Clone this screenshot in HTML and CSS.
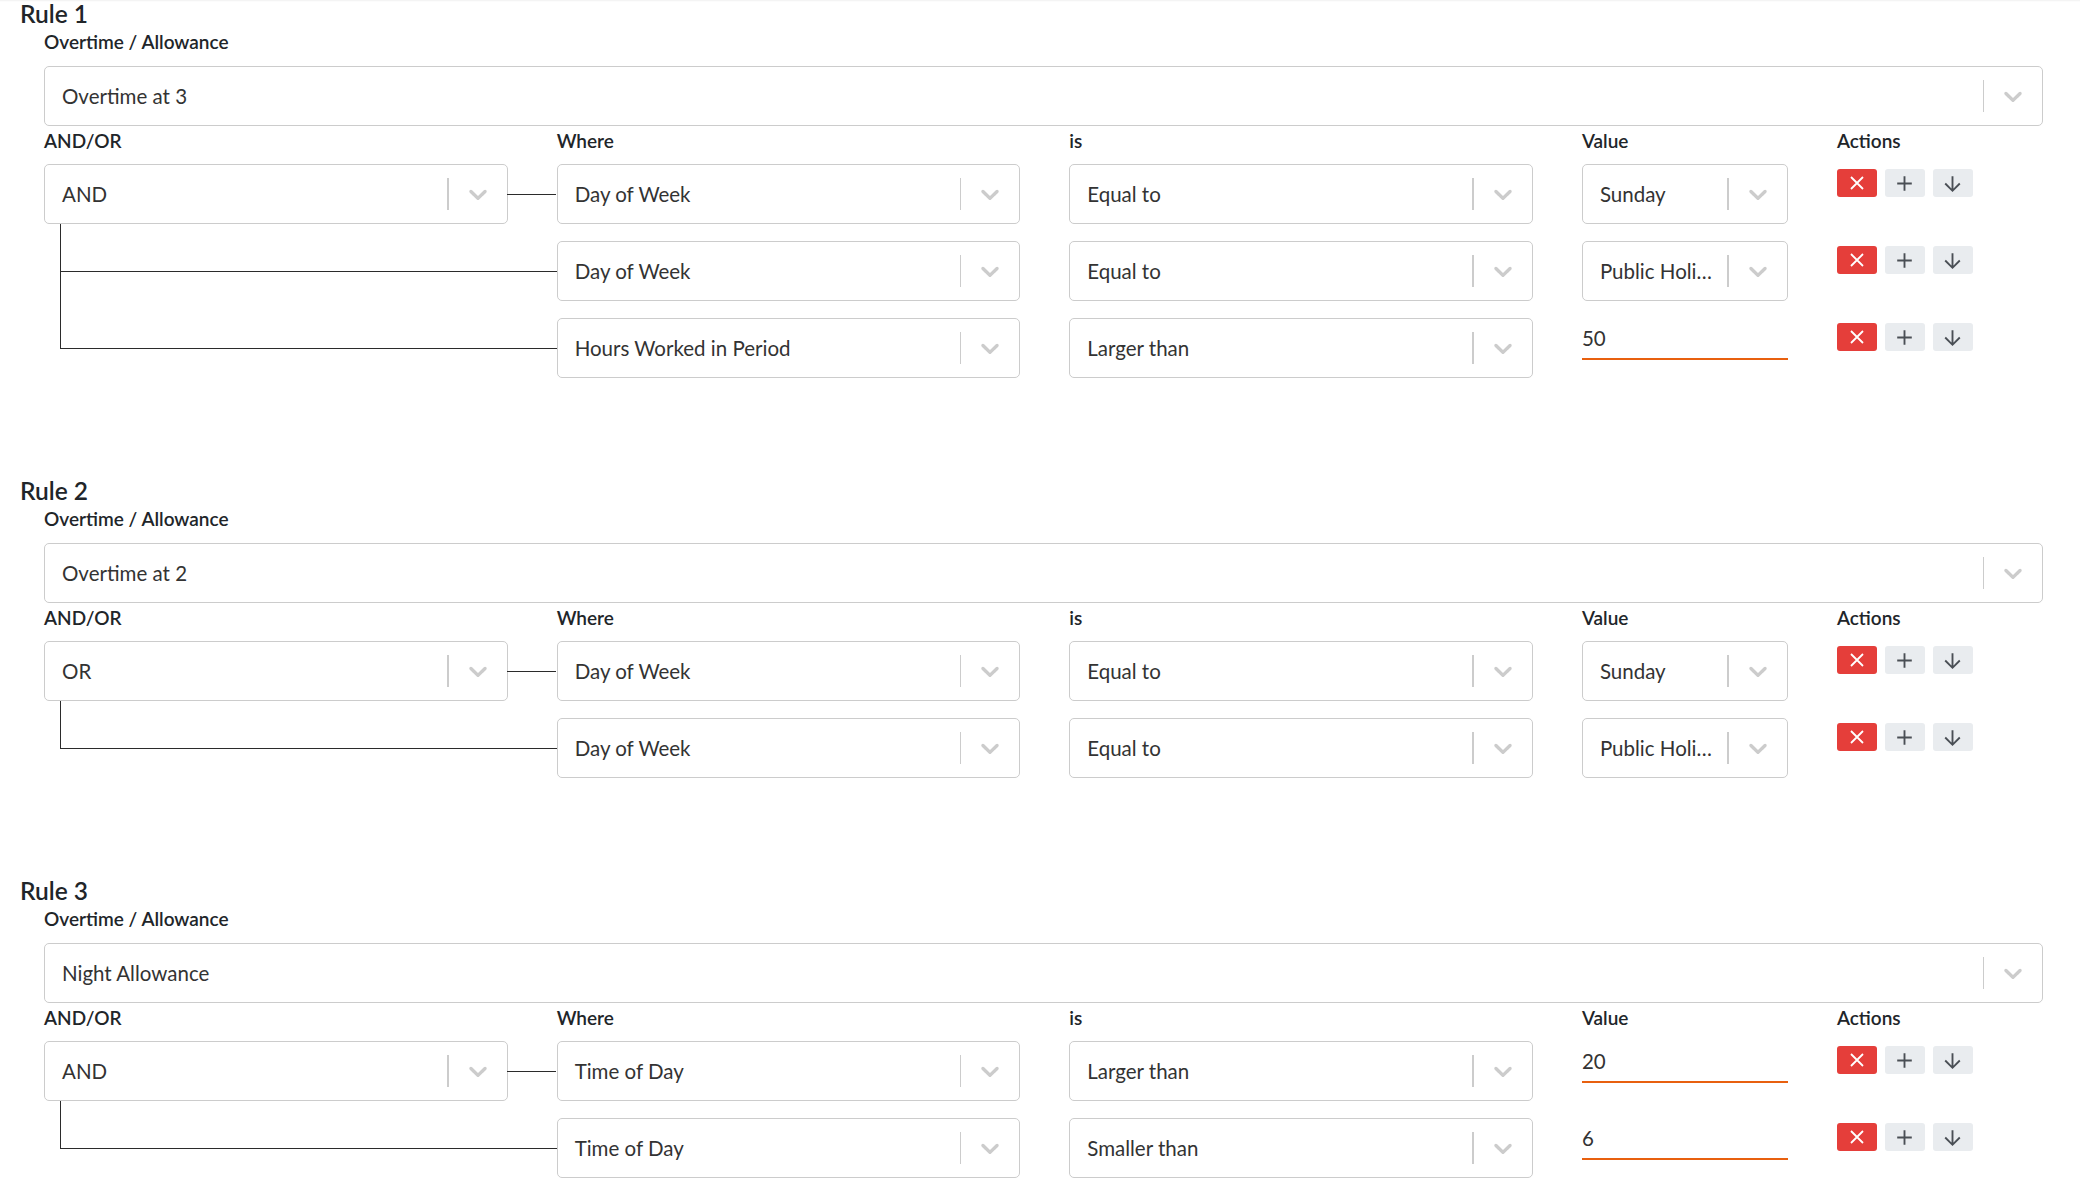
FILE: index.html
```html
<!DOCTYPE html>
<html lang="en">
<head>
  <meta charset="UTF-8" />
  <title>Overtime Rules</title>
  <link rel="stylesheet" href="styles.css">
</head>
<body>

  <div class="page">

    <!-- Rule 1 -->
    <section class="rule">
      <h2 class="rule-title">Rule 1</h2>
      <div class="rule-body">
        <label class="field-label">Overtime / Allowance</label>
        <div class="select">
          <span class="select-value">Overtime at 3</span>
          <span class="select-sep"></span>
          <span class="select-arrow"><svg viewBox="0 0 20 20"><path d="M4.516 7.548c0.436-0.446 1.043-0.481 1.576 0l3.908 3.747 3.908-3.747c0.533-0.481 1.141-0.446 1.574 0 0.436 0.445 0.408 1.197 0 1.615-0.406 0.418-4.695 4.502-4.695 4.502-0.217 0.223-0.502 0.335-0.787 0.335s-0.57-0.112-0.789-0.335c0 0-4.287-4.084-4.695-4.502s-0.436-1.17 0-1.615z"/></svg></span>
        </div>

        <div class="cond-grid cond-head">
          <label class="field-label">AND/OR</label>
          <label class="field-label">Where</label>
          <label class="field-label">is</label>
          <label class="field-label">Value</label>
          <label class="field-label">Actions</label>
        </div>

        <div class="cond-rows">
          <div class="cond-grid cond-row">
            <div class="select logic">
              <span class="select-value">AND</span>
              <span class="select-sep"></span>
              <span class="select-arrow"><svg viewBox="0 0 20 20"><path d="M4.516 7.548c0.436-0.446 1.043-0.481 1.576 0l3.908 3.747 3.908-3.747c0.533-0.481 1.141-0.446 1.574 0 0.436 0.445 0.408 1.197 0 1.615-0.406 0.418-4.695 4.502-4.695 4.502-0.217 0.223-0.502 0.335-0.787 0.335s-0.57-0.112-0.789-0.335c0 0-4.287-4.084-4.695-4.502s-0.436-1.17 0-1.615z"/></svg></span>
            </div>
            <div class="select">
              <span class="select-value">Day of Week</span>
              <span class="select-sep"></span>
              <span class="select-arrow"><svg viewBox="0 0 20 20"><path d="M4.516 7.548c0.436-0.446 1.043-0.481 1.576 0l3.908 3.747 3.908-3.747c0.533-0.481 1.141-0.446 1.574 0 0.436 0.445 0.408 1.197 0 1.615-0.406 0.418-4.695 4.502-4.695 4.502-0.217 0.223-0.502 0.335-0.787 0.335s-0.57-0.112-0.789-0.335c0 0-4.287-4.084-4.695-4.502s-0.436-1.17 0-1.615z"/></svg></span>
            </div>
            <div class="select">
              <span class="select-value">Equal to</span>
              <span class="select-sep"></span>
              <span class="select-arrow"><svg viewBox="0 0 20 20"><path d="M4.516 7.548c0.436-0.446 1.043-0.481 1.576 0l3.908 3.747 3.908-3.747c0.533-0.481 1.141-0.446 1.574 0 0.436 0.445 0.408 1.197 0 1.615-0.406 0.418-4.695 4.502-4.695 4.502-0.217 0.223-0.502 0.335-0.787 0.335s-0.57-0.112-0.789-0.335c0 0-4.287-4.084-4.695-4.502s-0.436-1.17 0-1.615z"/></svg></span>
            </div>
            <div class="select">
              <span class="select-value">Sunday</span>
              <span class="select-sep"></span>
              <span class="select-arrow"><svg viewBox="0 0 20 20"><path d="M4.516 7.548c0.436-0.446 1.043-0.481 1.576 0l3.908 3.747 3.908-3.747c0.533-0.481 1.141-0.446 1.574 0 0.436 0.445 0.408 1.197 0 1.615-0.406 0.418-4.695 4.502-4.695 4.502-0.217 0.223-0.502 0.335-0.787 0.335s-0.57-0.112-0.789-0.335c0 0-4.287-4.084-4.695-4.502s-0.436-1.17 0-1.615z"/></svg></span>
            </div>
            <div class="actions">
              <button class="btn btn-remove"><svg viewBox="0 0 24 24"><path d="M18 6 6 18M6 6l12 12"/></svg></button>
              <button class="btn"><svg viewBox="0 0 24 24"><path d="M12 5v14M5 12h14"/></svg></button>
              <button class="btn"><svg viewBox="0 0 24 24"><path d="M12 5v14M19 12l-7 7-7-7"/></svg></button>
            </div>
          </div>

          <div class="cond-grid cond-row">
            <div class="branch"></div>
            <div class="select">
              <span class="select-value">Day of Week</span>
              <span class="select-sep"></span>
              <span class="select-arrow"><svg viewBox="0 0 20 20"><path d="M4.516 7.548c0.436-0.446 1.043-0.481 1.576 0l3.908 3.747 3.908-3.747c0.533-0.481 1.141-0.446 1.574 0 0.436 0.445 0.408 1.197 0 1.615-0.406 0.418-4.695 4.502-4.695 4.502-0.217 0.223-0.502 0.335-0.787 0.335s-0.57-0.112-0.789-0.335c0 0-4.287-4.084-4.695-4.502s-0.436-1.17 0-1.615z"/></svg></span>
            </div>
            <div class="select">
              <span class="select-value">Equal to</span>
              <span class="select-sep"></span>
              <span class="select-arrow"><svg viewBox="0 0 20 20"><path d="M4.516 7.548c0.436-0.446 1.043-0.481 1.576 0l3.908 3.747 3.908-3.747c0.533-0.481 1.141-0.446 1.574 0 0.436 0.445 0.408 1.197 0 1.615-0.406 0.418-4.695 4.502-4.695 4.502-0.217 0.223-0.502 0.335-0.787 0.335s-0.57-0.112-0.789-0.335c0 0-4.287-4.084-4.695-4.502s-0.436-1.17 0-1.615z"/></svg></span>
            </div>
            <div class="select">
              <span class="select-value">Public Holiday</span>
              <span class="select-sep"></span>
              <span class="select-arrow"><svg viewBox="0 0 20 20"><path d="M4.516 7.548c0.436-0.446 1.043-0.481 1.576 0l3.908 3.747 3.908-3.747c0.533-0.481 1.141-0.446 1.574 0 0.436 0.445 0.408 1.197 0 1.615-0.406 0.418-4.695 4.502-4.695 4.502-0.217 0.223-0.502 0.335-0.787 0.335s-0.57-0.112-0.789-0.335c0 0-4.287-4.084-4.695-4.502s-0.436-1.17 0-1.615z"/></svg></span>
            </div>
            <div class="actions">
              <button class="btn btn-remove"><svg viewBox="0 0 24 24"><path d="M18 6 6 18M6 6l12 12"/></svg></button>
              <button class="btn"><svg viewBox="0 0 24 24"><path d="M12 5v14M5 12h14"/></svg></button>
              <button class="btn"><svg viewBox="0 0 24 24"><path d="M12 5v14M19 12l-7 7-7-7"/></svg></button>
            </div>
          </div>

          <div class="cond-grid cond-row">
            <div class="branch"></div>
            <div class="select">
              <span class="select-value">Hours Worked in Period</span>
              <span class="select-sep"></span>
              <span class="select-arrow"><svg viewBox="0 0 20 20"><path d="M4.516 7.548c0.436-0.446 1.043-0.481 1.576 0l3.908 3.747 3.908-3.747c0.533-0.481 1.141-0.446 1.574 0 0.436 0.445 0.408 1.197 0 1.615-0.406 0.418-4.695 4.502-4.695 4.502-0.217 0.223-0.502 0.335-0.787 0.335s-0.57-0.112-0.789-0.335c0 0-4.287-4.084-4.695-4.502s-0.436-1.17 0-1.615z"/></svg></span>
            </div>
            <div class="select">
              <span class="select-value">Larger than</span>
              <span class="select-sep"></span>
              <span class="select-arrow"><svg viewBox="0 0 20 20"><path d="M4.516 7.548c0.436-0.446 1.043-0.481 1.576 0l3.908 3.747 3.908-3.747c0.533-0.481 1.141-0.446 1.574 0 0.436 0.445 0.408 1.197 0 1.615-0.406 0.418-4.695 4.502-4.695 4.502-0.217 0.223-0.502 0.335-0.787 0.335s-0.57-0.112-0.789-0.335c0 0-4.287-4.084-4.695-4.502s-0.436-1.17 0-1.615z"/></svg></span>
            </div>
            <input class="value-input" type="text" value="50" />
            <div class="actions">
              <button class="btn btn-remove"><svg viewBox="0 0 24 24"><path d="M18 6 6 18M6 6l12 12"/></svg></button>
              <button class="btn"><svg viewBox="0 0 24 24"><path d="M12 5v14M5 12h14"/></svg></button>
              <button class="btn"><svg viewBox="0 0 24 24"><path d="M12 5v14M19 12l-7 7-7-7"/></svg></button>
            </div>
          </div>
        </div>
      </div>
    </section>

    <!-- Rule 2 -->
    <section class="rule">
      <h2 class="rule-title">Rule 2</h2>
      <div class="rule-body">
        <label class="field-label">Overtime / Allowance</label>
        <div class="select">
          <span class="select-value">Overtime at 2</span>
          <span class="select-sep"></span>
          <span class="select-arrow"><svg viewBox="0 0 20 20"><path d="M4.516 7.548c0.436-0.446 1.043-0.481 1.576 0l3.908 3.747 3.908-3.747c0.533-0.481 1.141-0.446 1.574 0 0.436 0.445 0.408 1.197 0 1.615-0.406 0.418-4.695 4.502-4.695 4.502-0.217 0.223-0.502 0.335-0.787 0.335s-0.57-0.112-0.789-0.335c0 0-4.287-4.084-4.695-4.502s-0.436-1.17 0-1.615z"/></svg></span>
        </div>

        <div class="cond-grid cond-head">
          <label class="field-label">AND/OR</label>
          <label class="field-label">Where</label>
          <label class="field-label">is</label>
          <label class="field-label">Value</label>
          <label class="field-label">Actions</label>
        </div>

        <div class="cond-rows">
          <div class="cond-grid cond-row">
            <div class="select logic">
              <span class="select-value">OR</span>
              <span class="select-sep"></span>
              <span class="select-arrow"><svg viewBox="0 0 20 20"><path d="M4.516 7.548c0.436-0.446 1.043-0.481 1.576 0l3.908 3.747 3.908-3.747c0.533-0.481 1.141-0.446 1.574 0 0.436 0.445 0.408 1.197 0 1.615-0.406 0.418-4.695 4.502-4.695 4.502-0.217 0.223-0.502 0.335-0.787 0.335s-0.57-0.112-0.789-0.335c0 0-4.287-4.084-4.695-4.502s-0.436-1.17 0-1.615z"/></svg></span>
            </div>
            <div class="select">
              <span class="select-value">Day of Week</span>
              <span class="select-sep"></span>
              <span class="select-arrow"><svg viewBox="0 0 20 20"><path d="M4.516 7.548c0.436-0.446 1.043-0.481 1.576 0l3.908 3.747 3.908-3.747c0.533-0.481 1.141-0.446 1.574 0 0.436 0.445 0.408 1.197 0 1.615-0.406 0.418-4.695 4.502-4.695 4.502-0.217 0.223-0.502 0.335-0.787 0.335s-0.57-0.112-0.789-0.335c0 0-4.287-4.084-4.695-4.502s-0.436-1.17 0-1.615z"/></svg></span>
            </div>
            <div class="select">
              <span class="select-value">Equal to</span>
              <span class="select-sep"></span>
              <span class="select-arrow"><svg viewBox="0 0 20 20"><path d="M4.516 7.548c0.436-0.446 1.043-0.481 1.576 0l3.908 3.747 3.908-3.747c0.533-0.481 1.141-0.446 1.574 0 0.436 0.445 0.408 1.197 0 1.615-0.406 0.418-4.695 4.502-4.695 4.502-0.217 0.223-0.502 0.335-0.787 0.335s-0.57-0.112-0.789-0.335c0 0-4.287-4.084-4.695-4.502s-0.436-1.17 0-1.615z"/></svg></span>
            </div>
            <div class="select">
              <span class="select-value">Sunday</span>
              <span class="select-sep"></span>
              <span class="select-arrow"><svg viewBox="0 0 20 20"><path d="M4.516 7.548c0.436-0.446 1.043-0.481 1.576 0l3.908 3.747 3.908-3.747c0.533-0.481 1.141-0.446 1.574 0 0.436 0.445 0.408 1.197 0 1.615-0.406 0.418-4.695 4.502-4.695 4.502-0.217 0.223-0.502 0.335-0.787 0.335s-0.57-0.112-0.789-0.335c0 0-4.287-4.084-4.695-4.502s-0.436-1.17 0-1.615z"/></svg></span>
            </div>
            <div class="actions">
              <button class="btn btn-remove"><svg viewBox="0 0 24 24"><path d="M18 6 6 18M6 6l12 12"/></svg></button>
              <button class="btn"><svg viewBox="0 0 24 24"><path d="M12 5v14M5 12h14"/></svg></button>
              <button class="btn"><svg viewBox="0 0 24 24"><path d="M12 5v14M19 12l-7 7-7-7"/></svg></button>
            </div>
          </div>

          <div class="cond-grid cond-row">
            <div class="branch"></div>
            <div class="select">
              <span class="select-value">Day of Week</span>
              <span class="select-sep"></span>
              <span class="select-arrow"><svg viewBox="0 0 20 20"><path d="M4.516 7.548c0.436-0.446 1.043-0.481 1.576 0l3.908 3.747 3.908-3.747c0.533-0.481 1.141-0.446 1.574 0 0.436 0.445 0.408 1.197 0 1.615-0.406 0.418-4.695 4.502-4.695 4.502-0.217 0.223-0.502 0.335-0.787 0.335s-0.57-0.112-0.789-0.335c0 0-4.287-4.084-4.695-4.502s-0.436-1.17 0-1.615z"/></svg></span>
            </div>
            <div class="select">
              <span class="select-value">Equal to</span>
              <span class="select-sep"></span>
              <span class="select-arrow"><svg viewBox="0 0 20 20"><path d="M4.516 7.548c0.436-0.446 1.043-0.481 1.576 0l3.908 3.747 3.908-3.747c0.533-0.481 1.141-0.446 1.574 0 0.436 0.445 0.408 1.197 0 1.615-0.406 0.418-4.695 4.502-4.695 4.502-0.217 0.223-0.502 0.335-0.787 0.335s-0.57-0.112-0.789-0.335c0 0-4.287-4.084-4.695-4.502s-0.436-1.17 0-1.615z"/></svg></span>
            </div>
            <div class="select">
              <span class="select-value">Public Holiday</span>
              <span class="select-sep"></span>
              <span class="select-arrow"><svg viewBox="0 0 20 20"><path d="M4.516 7.548c0.436-0.446 1.043-0.481 1.576 0l3.908 3.747 3.908-3.747c0.533-0.481 1.141-0.446 1.574 0 0.436 0.445 0.408 1.197 0 1.615-0.406 0.418-4.695 4.502-4.695 4.502-0.217 0.223-0.502 0.335-0.787 0.335s-0.57-0.112-0.789-0.335c0 0-4.287-4.084-4.695-4.502s-0.436-1.17 0-1.615z"/></svg></span>
            </div>
            <div class="actions">
              <button class="btn btn-remove"><svg viewBox="0 0 24 24"><path d="M18 6 6 18M6 6l12 12"/></svg></button>
              <button class="btn"><svg viewBox="0 0 24 24"><path d="M12 5v14M5 12h14"/></svg></button>
              <button class="btn"><svg viewBox="0 0 24 24"><path d="M12 5v14M19 12l-7 7-7-7"/></svg></button>
            </div>
          </div>
        </div>
      </div>
    </section>

    <!-- Rule 3 -->
    <section class="rule">
      <h2 class="rule-title">Rule 3</h2>
      <div class="rule-body">
        <label class="field-label">Overtime / Allowance</label>
        <div class="select">
          <span class="select-value">Night Allowance</span>
          <span class="select-sep"></span>
          <span class="select-arrow"><svg viewBox="0 0 20 20"><path d="M4.516 7.548c0.436-0.446 1.043-0.481 1.576 0l3.908 3.747 3.908-3.747c0.533-0.481 1.141-0.446 1.574 0 0.436 0.445 0.408 1.197 0 1.615-0.406 0.418-4.695 4.502-4.695 4.502-0.217 0.223-0.502 0.335-0.787 0.335s-0.57-0.112-0.789-0.335c0 0-4.287-4.084-4.695-4.502s-0.436-1.17 0-1.615z"/></svg></span>
        </div>

        <div class="cond-grid cond-head">
          <label class="field-label">AND/OR</label>
          <label class="field-label">Where</label>
          <label class="field-label">is</label>
          <label class="field-label">Value</label>
          <label class="field-label">Actions</label>
        </div>

        <div class="cond-rows">
          <div class="cond-grid cond-row">
            <div class="select logic">
              <span class="select-value">AND</span>
              <span class="select-sep"></span>
              <span class="select-arrow"><svg viewBox="0 0 20 20"><path d="M4.516 7.548c0.436-0.446 1.043-0.481 1.576 0l3.908 3.747 3.908-3.747c0.533-0.481 1.141-0.446 1.574 0 0.436 0.445 0.408 1.197 0 1.615-0.406 0.418-4.695 4.502-4.695 4.502-0.217 0.223-0.502 0.335-0.787 0.335s-0.57-0.112-0.789-0.335c0 0-4.287-4.084-4.695-4.502s-0.436-1.17 0-1.615z"/></svg></span>
            </div>
            <div class="select">
              <span class="select-value">Time of Day</span>
              <span class="select-sep"></span>
              <span class="select-arrow"><svg viewBox="0 0 20 20"><path d="M4.516 7.548c0.436-0.446 1.043-0.481 1.576 0l3.908 3.747 3.908-3.747c0.533-0.481 1.141-0.446 1.574 0 0.436 0.445 0.408 1.197 0 1.615-0.406 0.418-4.695 4.502-4.695 4.502-0.217 0.223-0.502 0.335-0.787 0.335s-0.57-0.112-0.789-0.335c0 0-4.287-4.084-4.695-4.502s-0.436-1.17 0-1.615z"/></svg></span>
            </div>
            <div class="select">
              <span class="select-value">Larger than</span>
              <span class="select-sep"></span>
              <span class="select-arrow"><svg viewBox="0 0 20 20"><path d="M4.516 7.548c0.436-0.446 1.043-0.481 1.576 0l3.908 3.747 3.908-3.747c0.533-0.481 1.141-0.446 1.574 0 0.436 0.445 0.408 1.197 0 1.615-0.406 0.418-4.695 4.502-4.695 4.502-0.217 0.223-0.502 0.335-0.787 0.335s-0.57-0.112-0.789-0.335c0 0-4.287-4.084-4.695-4.502s-0.436-1.17 0-1.615z"/></svg></span>
            </div>
            <input class="value-input" type="text" value="20" />
            <div class="actions">
              <button class="btn btn-remove"><svg viewBox="0 0 24 24"><path d="M18 6 6 18M6 6l12 12"/></svg></button>
              <button class="btn"><svg viewBox="0 0 24 24"><path d="M12 5v14M5 12h14"/></svg></button>
              <button class="btn"><svg viewBox="0 0 24 24"><path d="M12 5v14M19 12l-7 7-7-7"/></svg></button>
            </div>
          </div>

          <div class="cond-grid cond-row">
            <div class="branch"></div>
            <div class="select">
              <span class="select-value">Time of Day</span>
              <span class="select-sep"></span>
              <span class="select-arrow"><svg viewBox="0 0 20 20"><path d="M4.516 7.548c0.436-0.446 1.043-0.481 1.576 0l3.908 3.747 3.908-3.747c0.533-0.481 1.141-0.446 1.574 0 0.436 0.445 0.408 1.197 0 1.615-0.406 0.418-4.695 4.502-4.695 4.502-0.217 0.223-0.502 0.335-0.787 0.335s-0.57-0.112-0.789-0.335c0 0-4.287-4.084-4.695-4.502s-0.436-1.17 0-1.615z"/></svg></span>
            </div>
            <div class="select">
              <span class="select-value">Smaller than</span>
              <span class="select-sep"></span>
              <span class="select-arrow"><svg viewBox="0 0 20 20"><path d="M4.516 7.548c0.436-0.446 1.043-0.481 1.576 0l3.908 3.747 3.908-3.747c0.533-0.481 1.141-0.446 1.574 0 0.436 0.445 0.408 1.197 0 1.615-0.406 0.418-4.695 4.502-4.695 4.502-0.217 0.223-0.502 0.335-0.787 0.335s-0.57-0.112-0.789-0.335c0 0-4.287-4.084-4.695-4.502s-0.436-1.17 0-1.615z"/></svg></span>
            </div>
            <input class="value-input" type="text" value="6" />
            <div class="actions">
              <button class="btn btn-remove"><svg viewBox="0 0 24 24"><path d="M18 6 6 18M6 6l12 12"/></svg></button>
              <button class="btn"><svg viewBox="0 0 24 24"><path d="M12 5v14M5 12h14"/></svg></button>
              <button class="btn"><svg viewBox="0 0 24 24"><path d="M12 5v14M19 12l-7 7-7-7"/></svg></button>
            </div>
          </div>
        </div>
      </div>
    </section>

  </div>

</body>
</html>
```

FILE: styles.css
```css
body {
  font-family: Lato, "Open Sans", sans-serif;
  color: #212529;
  background-color: #fff;
  margin: 0;
}
.page {
  padding: 0 37px 0 20px;
  box-shadow: inset 0 3px 2px -2px rgba(0, 0, 0, 0.06);
}
.rule {
  margin-bottom: 99px;
}
.rule-title {
  font-size: 24.5px;
  font-weight: 600;
  line-height: 28px;
  margin: 0;
}
.rule-body {
  padding-left: 24px;
}
.field-label {
  display: block;
  font-size: 19px;
  font-weight: 600;
  line-height: 24px;
  margin-top: 2px;
  margin-bottom: 12px;
}

/* select boxes */
.select {
  display: flex;
  align-items: center;
  height: 60px;
  box-sizing: border-box;
  border: 1px solid #ccc;
  border-radius: 5px;
  background: #fff;
  color: #333;
  font-size: 20.5px;
  min-width: 0;
}
.select-value {
  flex: 1;
  min-width: 0;
  padding: 0 6px 0 17px;
  white-space: nowrap;
  overflow: hidden;
  text-overflow: ellipsis;
}
.select-sep {
  width: 1.5px;
  height: 32px;
  background-color: #ccc;
}
.select-arrow {
  width: 58px;
  display: flex;
  justify-content: center;
}
.select-arrow svg {
  width: 30px;
  height: 30px;
  fill: #ccc;
}

/* condition rows */
.cond-grid {
  display: grid;
  grid-template-columns: minmax(0, 9fr) minmax(0, 9fr) minmax(0, 9fr) minmax(0, 4fr) minmax(0, 4fr);
  column-gap: 49px;
}
.cond-head {
  margin-top: 3px;
}
.cond-head .field-label {
  margin: 0 0 11px;
}
.cond-row {
  height: 60px;
  margin-bottom: 17px;
}
.cond-row:last-child {
  margin-bottom: 0;
}
.logic {
  position: relative;
}
.logic::after {
  content: "";
  position: absolute;
  left: 100%;
  top: 50%;
  width: 49px;
  border-top: 1.5px solid #2b2b2b;
}
.branch {
  position: relative;
}
.branch::before {
  content: "";
  position: absolute;
  left: 16px;
  top: -17px;
  bottom: 0;
  border-left: 1.5px solid #2b2b2b;
}
.cond-row:last-child .branch::before {
  bottom: 50%;
}
.branch::after {
  content: "";
  position: absolute;
  left: 16px;
  right: -49px;
  top: 50%;
  border-top: 1.5px solid #2b2b2b;
}

.value-input {
  align-self: start;
  height: 42px;
  width: 100%;
  min-width: 0;
  box-sizing: border-box;
  border: none;
  border-bottom: 2px solid #e8600f;
  padding: 0;
  font-family: inherit;
  font-size: 20.5px;
  color: #333;
  background: transparent;
  outline: none;
}

/* action buttons */
.actions {
  display: flex;
  gap: 8px;
  padding-top: 5px;
  align-items: flex-start;
}
.btn {
  width: 40px;
  height: 28px;
  padding: 0;
  border: none;
  border-radius: 3px;
  background-color: #e9ecef;
  display: flex;
  align-items: center;
  justify-content: center;
  cursor: pointer;
}
.btn svg {
  width: 25px;
  height: 25px;
  fill: none;
  stroke: #4a4f55;
  stroke-width: 1.8;
}
.btn-remove {
  background-color: #e53e3a;
}
.btn-remove svg {
  width: 24px;
  height: 24px;
  stroke: #fff;
  stroke-width: 1.8;
}
```
